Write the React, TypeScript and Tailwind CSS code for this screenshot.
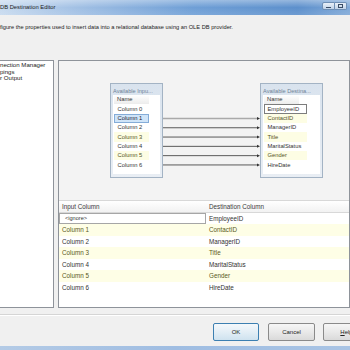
import React from "react";

const leftRows = ["Column 0", "Column 1", "Column 2", "Column 3", "Column 4", "Column 5", "Column 6"];
const rightRows = ["EmployeeID", "ContactID", "ManagerID", "Title", "MaritalStatus", "Gender", "HireDate"];
const gridRows: [string, string][] = [
  ["<ignore>", "EmployeeID"],
  ["Column 1", "ContactID"],
  ["Column 2", "ManagerID"],
  ["Column 3", "Title"],
  ["Column 4", "MaritalStatus"],
  ["Column 5", "Gender"],
  ["Column 6", "HireDate"],
];

function Box({ title, rows, side }: { title: string; rows: string[]; side: "in" | "out" }) {
  return (
    <div className="flex flex-col w-full h-full border border-[#a3b3c4] bg-[linear-gradient(180deg,#d9e3ee_0%,#e9eef4_100%)]">
      <div className="h-[11px] flex items-end pl-[2px] text-[5.6px] leading-[8px] text-[#6f8296] whitespace-nowrap overflow-hidden">
        {title}
      </div>
      <div className="mx-[2px] mb-[3px] flex-1 bg-white flex flex-col pt-[0.2px]">
        <div className="h-[9.3px] ml-[1px] w-[35px] flex items-center pl-[3px] bg-[linear-gradient(180deg,#ffffff_0%,#ececec_100%)] text-[#333]">
          Name
        </div>
        {rows.map((r, i) => {
          const sel = side === "in" && i === 1;
          const focus = side === "out" && i === 0;
          const yellow = i === 1 || i === 3 || i === 5;
          const w = side === "in" ? "w-[35px]" : "w-[43px]";
          let cls = "bg-transparent border border-transparent text-[#333]";
          if (sel) cls = "bg-[#cfe4f8] border border-[#84acd8] text-[#223]";
          else if (focus) cls = "bg-white border border-[#7d7d7d] text-[#333]";
          else if (yellow) cls = "bg-[#fdfde4] border border-transparent text-[#54541e]";
          return (
            <div key={r} className={`h-[9.3px] ml-[1px] ${w} flex items-center pl-[2.5px] whitespace-nowrap ${cls}`}>
              {r}
            </div>
          );
        })}
      </div>
    </div>
  );
}

export default function App() {
  const rowTop = 95.2 - 61;
  const lineYs = [1, 2, 3, 4, 5, 6].map((i) => rowTop + (i + 1) * 9.3 + 4.65);
  return (
    <div className="w-[350px] h-[350px] flex flex-col bg-[#f0f0f0] overflow-hidden font-['Liberation_Sans',Arial,sans-serif] text-[#222]">
      {/* title bar */}
      <div className="h-[15px] shrink-0 flex items-center justify-between bg-[linear-gradient(90deg,#c7daef_0%,#9dbde3_25%,#6f9fd6_55%,#5d90cc_85%,#80a9d8_100%)]">
        <div className="relative h-full w-full bg-[linear-gradient(180deg,rgba(255,255,255,0.35)_0%,rgba(255,255,255,0)_50%,rgba(255,255,255,0.1)_100%)] flex items-center justify-between">
          <span className="ml-[-13.2px] text-[5.8px] text-[#1b1b1b] whitespace-nowrap leading-none">OLE DB Destination Editor</span>
          <div className="flex mr-[3px] mt-[-3px]">
            <div className="w-[13px] h-[8px] border border-[#6f8fb4] rounded-l-[2px] bg-[linear-gradient(180deg,#e9f0f8_0%,#bfd2e8_100%)] flex items-end justify-center pb-[1px]">
              <div className="w-[5px] h-[1.5px] bg-[#3a4d66]" />
            </div>
            <div className="w-[12px] h-[8px] border border-l-0 border-[#6f8fb4] rounded-r-[2px] bg-[linear-gradient(180deg,#e9f0f8_0%,#bfd2e8_100%)] flex items-center justify-center">
              <div className="w-[5px] h-[4px] border border-[#3a4d66] border-t-[1.5px]" />
            </div>
          </div>
        </div>
      </div>

      {/* description */}
      <div className="mt-[8px] h-[8px] leading-[8px] text-[5.7px] text-[#222] whitespace-nowrap ml-[-10.5px]">
        Configure the properties used to insert data into a relational database using an OLE DB provider.
      </div>

      {/* main */}
      <div className="mt-[29px] h-[248px] shrink-0 flex">
        <div className="ml-[-1px] w-[55px] h-full border border-[#8e939a] bg-white overflow-hidden pt-[1px] text-[6.1px] leading-[6.7px] text-[#222]">
          <div className="ml-[-11.2px] whitespace-nowrap">Connection Manager</div>
          <div className="ml-[-11.9px] whitespace-nowrap">Mappings</div>
          <div className="ml-[-11.4px] whitespace-nowrap">Error Output</div>
        </div>
        <div className="ml-[4px] w-[292px] h-full border border-[#8e939a] flex flex-col bg-white">
          {/* diagram */}
          <div className="relative h-[139px] shrink-0 bg-[#f3f3f3] text-[5.8px]">
            <svg className="absolute left-0 top-0" width="290" height="139">
              {lineYs.map((y, i) => (
                <g key={i}>
                  <line
                    x1={104}
                    y1={y}
                    x2={199}
                    y2={y}
                    stroke={i === 0 ? "#a9a9a9" : "#5a5a5a"}
                    strokeWidth={i === 0 ? 1.6 : 1}
                  />
                  <polygon points={`${198},${y - 1.5} ${201},${y} ${198},${y + 1.5}`} fill="#333" />
                </g>
              ))}
            </svg>
            <div className="absolute left-[51px] top-[22px] w-[53px] h-[95px]">
              <Box title="Available Inpu..." rows={leftRows} side="in" />
            </div>
            <div className="absolute left-[201px] top-[22px] w-[63px] h-[95px]">
              <Box title="Available Destina..." rows={rightRows} side="out" />
            </div>
          </div>
          {/* grid */}
          <div className="flex-1 flex flex-col bg-white text-[6.3px]">
            <div className="h-[12.5px] shrink-0 flex items-center border-t border-b border-[#d8d8d8] bg-[linear-gradient(180deg,#ffffff_0%,#f2f2f2_100%)] text-[#3a3a3a]">
              <div className="w-[147px] pl-[3px]">Input Column</div>
              <div className="pl-[3px]">Destination Column</div>
            </div>
            {gridRows.map(([a, b], i) => {
              const yellow = i % 2 === 1;
              return (
                <div
                  key={i}
                  className={`h-[11.5px] shrink-0 flex items-center ${yellow ? "bg-[#fefee6] text-[#5a5a22]" : "bg-white text-[#333]"}`}
                >
                  {i === 0 ? (
                    <div className="w-[147px] h-full border border-[#a6a6a6] flex items-center pl-[5px] text-[5.6px] text-[#333]">
                      {a}
                    </div>
                  ) : (
                    <div className="w-[147px] pl-[3px]">{a}</div>
                  )}
                  <div className="pl-[3px]">{b}</div>
                </div>
              );
            })}
          </div>
        </div>
      </div>

      {/* separator */}
      <div className="mt-[6px] h-px bg-[#d5d5d5] shrink-0" />
      <div className="h-px bg-white shrink-0" />

      {/* buttons */}
      <div className="mt-[7px] flex shrink-0 text-[6px] text-[#222]">
        <div className="ml-[213px] w-[46px] h-[18px] shrink-0 rounded-[2px] border border-[#3c7fb1] bg-[linear-gradient(180deg,#f4f8fb_0%,#e3eef6_50%,#cfe2ef_100%)] flex items-center justify-center">
          OK
        </div>
        <div className="ml-[9px] w-[47px] h-[18px] shrink-0 rounded-[2px] border border-[#8a8a8a] bg-[linear-gradient(180deg,#f6f6f6_0%,#e9e9e9_50%,#dadada_100%)] flex items-center justify-center">
          Cancel
        </div>
        <div className="ml-[8px] w-[47px] h-[18px] shrink-0 rounded-[2px] border border-[#8a8a8a] bg-[linear-gradient(180deg,#f6f6f6_0%,#e9e9e9_50%,#dadada_100%)] flex items-center justify-center">
          <span>
            <span className="underline">H</span>elp
          </span>
        </div>
      </div>

      <div className="mt-auto h-[4px] shrink-0 bg-[linear-gradient(90deg,#b4cbe6_0%,#9fbde2_50%,#a9c4e4_100%)]" />
    </div>
  );
}
